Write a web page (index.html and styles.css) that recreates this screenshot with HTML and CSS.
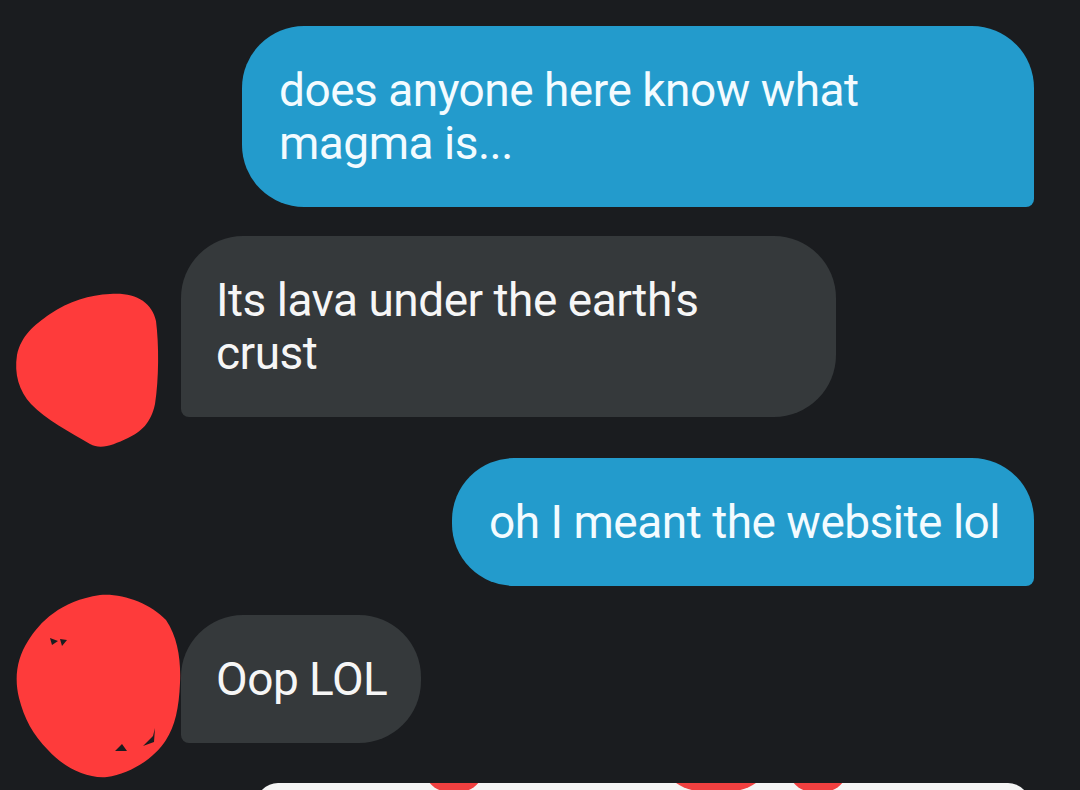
FILE: index.html
```html
<!DOCTYPE html>
<html lang="en">
<head>
<meta charset="utf-8">
<title>Chat</title>
<link rel="stylesheet" href="styles.css">
</head>
<body>
<div class="chat">
  <div class="row sent first">
    <div class="bubble sent-bubble wide">does anyone here know what<br>magma is...</div>
  </div>
  <div class="row recv">
    <svg class="scribble s1" width="180" height="470" viewBox="0 0 180 470" aria-hidden="true">
      <path fill="#fe3b3b" d="M110 295 C135 293 152 303 156 322 C159 345 159 380 155 405 C151 424 141 433 128 439 C113 446 101 451 90 445 C70 433 46 421 31 405 C19 392 14 375 17 356 C21 337 34 326 50 315 C69 302 90 296 110 295 Z"/>
    </svg>
    <div class="bubble recv-bubble wide">Its lava under the earth's<br>crust</div>
  </div>
  <div class="row sent">
    <div class="bubble sent-bubble">oh I meant the website lol</div>
  </div>
  <div class="row recv">
    <svg class="scribble s2" width="190" height="800" viewBox="0 0 190 800" aria-hidden="true">
      <path fill="#fe3b3b" d="M100 597 C122 595 150 605 166 622 C178 640 181 662 180 685 C179 710 175 728 166 742 C155 760 130 776 107 779 C86 781 62 768 48 752 C33 737 24 720 19 700 C14 680 17 660 28 643 C40 624 60 603 100 597 Z"/>
      <path fill="#1b1d20" d="M50 640 L58 643 L52 647 Z M60 641 L67 642 L62 648 Z M115 753 L122 746 L127 753 Z M143 748 L153 738 L155 730 L154 744 Z"/>
    </svg>
    <div class="bubble recv-bubble">Oop LOL</div>
  </div>
  <div class="next-card">
    <span class="mark m1"></span>
    <span class="mark m2"></span>
    <span class="mark m3"></span>
  </div>
</div>
</body>
</html>
```

FILE: styles.css
```css
html, body {
  margin: 0;
  padding: 0;
}
body {
  background: #1a1c1f;
  width: 1080px;
  height: 790px;
  overflow: hidden;
  font-family: Roboto, "Noto Sans", "Liberation Sans", sans-serif;
}
.chat {
  display: flex;
  flex-direction: column;
  padding-top: 26px;
}
.row {
  display: flex;
  position: relative;
}
.row.sent {
  justify-content: flex-end;
  padding-right: 46px;
  margin-top: 41px;
}
.row.sent.first {
  margin-top: 0;
}
.row.recv {
  padding-left: 181px;
  margin-top: 29px;
}
.bubble {
  box-sizing: border-box;
  font-size: 46px;
  letter-spacing: -0.5px;
  line-height: 53px;
  padding: 38px 34px 37px 36px;
  white-space: nowrap;
}
.sent-bubble {
  background: #239bcc;
  color: #f3fbff;
  border-radius: 62px 62px 8px 62px;
  padding-left: 37px;
}
.sent-bubble.wide {
  width: 792px;
}
.recv-bubble {
  background: #35393b;
  color: #f6f6f6;
  border-radius: 62px 62px 62px 8px;
  padding-left: 35px;
}
.recv-bubble.wide {
  width: 655px;
}
.scribble {
  position: absolute;
  left: 0;
  top: 0;
  overflow: visible;
}
.scribble.s1 {
  top: -237px;
}
.scribble.s2 {
  top: -617px;
}
.next-card {
  position: relative;
  margin: 40px 0 0 256px;
  width: 774px;
  height: 40px;
  border-radius: 22px 22px 0 0;
  background: #f4f4f4;
  overflow: hidden;
}
.mark {
  position: absolute;
  top: -30px;
  height: 40px;
  background: #f04040;
  border-radius: 50%;
}
.m1 { left: 170px; width: 56px; }
.m2 { left: 414px; width: 92px; }
.m3 { left: 534px; width: 56px; }
```
